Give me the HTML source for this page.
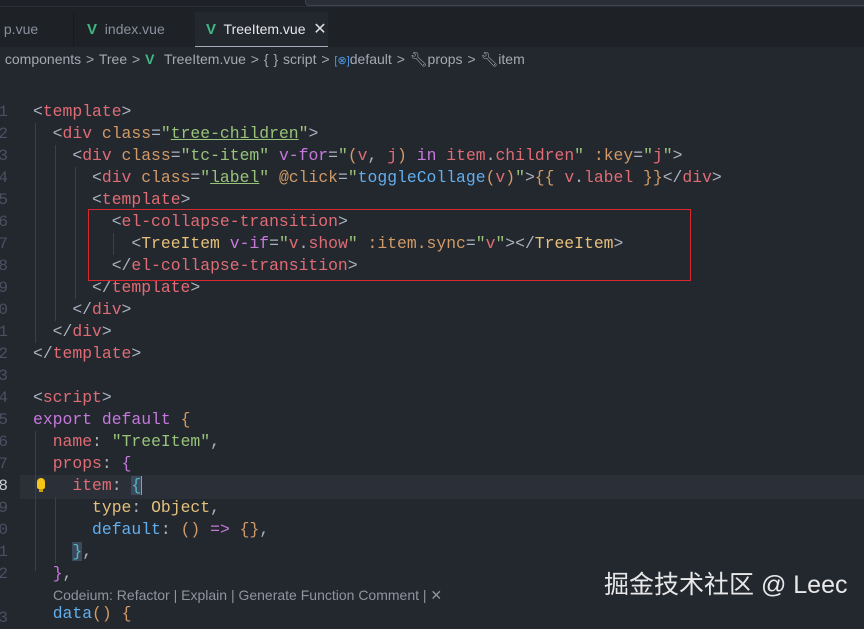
<!DOCTYPE html>
<html><head><meta charset="utf-8"><style>
*{margin:0;padding:0;box-sizing:border-box}
body{width:864px;height:615px;overflow:hidden;background:#23272e;position:relative;font-family:"Liberation Sans",sans-serif}
#tabs{position:absolute;left:0;top:0;width:864px;height:47px;background:#1e2227}
#title{position:absolute;left:0;top:0;width:864px;height:7px;background:#1e2127;border-bottom:1px solid #2a2e36}
#title .box{position:absolute;left:305px;top:-4px;width:570px;height:10px;border:1px solid #3e4450;border-radius:4px;background:#2a2e36}
.tab{position:absolute;top:12px;height:35px;font-size:14px;color:#8a909c;line-height:35px;white-space:nowrap}
.tab.active{background:#23272e;color:#e6e6e6;border-bottom:1px solid #aab}
.v{color:#41b883;font-weight:bold;font-size:15px}
#crumbs{position:absolute;left:0;top:49px;height:20px;font-size:14px;color:#a4a9b3;white-space:nowrap;line-height:20px;word-spacing:1px}
.code{position:absolute;left:33px;font-family:"Liberation Mono",monospace;font-size:16.4px;white-space:pre;line-height:22px;height:22px;color:#abb2bf}
.ln{position:absolute;left:-6px;width:14px;text-align:right;font-family:"Liberation Mono",monospace;font-size:16px;color:#495162;line-height:22px}
.t{color:#e06c75}.a{color:#d19a66}.s{color:#98c379}.k{color:#c678dd}.f{color:#61afef}.p{color:#abb2bf}.y{color:#e5c07b}.c{color:#56b6c2}
.g{position:absolute;width:1px;background:#3b4048}
</style></head><body>
<div id="tabs">
<div class="tab" style="left:0;width:74px;border-right:1px solid #181a1f">&nbsp;p.vue</div>
<div class="tab" style="left:75px;width:119px;padding-left:12px"><span class="v">V</span>&nbsp; index.vue</div>
<div class="tab active" style="left:195px;width:133px;padding-left:11px"><span class="v">V</span>&nbsp; TreeItem.vue &nbsp;<span style="color:#ddd;font-size:16px">✕</span></div>
</div>
<div id="title"><div class="box"></div></div>
<div id="crumbs">&nbsp;components &gt; Tree &gt; <span class="v" style="font-size:14px">V</span>&nbsp; TreeItem.vue &gt; { } script &gt; <span style="color:#4d9be8;font-size:11px">[⊗]</span>default &gt; 🔧︎props &gt; 🔧︎item</div>
<div style="position:absolute;left:20px;top:475px;width:844px;height:24px;background:#2b3038"></div>
<div class="g" style="left:35px;top:123px;height:220px"></div>
<div class="g" style="left:55px;top:145px;height:176px"></div>
<div class="g" style="left:75px;top:167px;height:132px"></div>
<div class="g" style="left:113px;top:233px;height:22px"></div>
<div class="g" style="left:35px;top:431px;height:140px"></div>
<div class="g" style="left:55px;top:497px;height:66px"></div>

<div class="ln" style="top:101px">1</div><div class="code" style="top:101px"><span class="p">&lt;</span><span class="t">template</span><span class="p">&gt;</span></div>
<div class="ln" style="top:123px">2</div><div class="code" style="top:123px">  &lt;<span class="t">div</span> <span class="a">class</span>=<span class="s">"<u>tree-children</u>"</span>&gt;</div>
<div class="ln" style="top:145px">3</div><div class="code" style="top:145px">    &lt;<span class="t">div</span> <span class="a">class</span>=<span class="s">"tc-item"</span> <span class="k">v-for</span>=<span class="s">"</span><span class="a">(</span><span class="t">v</span>, <span class="t">j</span><span class="a">)</span> <span class="k">in</span> <span class="t">item</span>.<span class="t">children</span><span class="s">"</span> <span class="a">:key</span>=<span class="s">"</span><span class="t">j</span><span class="s">"</span>&gt;</div>
<div class="ln" style="top:167px">4</div><div class="code" style="top:167px">      &lt;<span class="t">div</span> <span class="a">class</span>=<span class="s">"<u>label</u>"</span> <span class="a">@click</span>=<span class="s">"</span><span class="f">toggleCollage</span><span class="a">(</span><span class="t">v</span><span class="a">)</span><span class="s">"</span>&gt;<span class="a">{{</span> <span class="t">v</span>.<span class="t">label</span> <span class="a">}}</span>&lt;/<span class="t">div</span>&gt;</div>
<div class="ln" style="top:189px">5</div><div class="code" style="top:189px">      &lt;<span class="t">template</span>&gt;</div>
<div class="ln" style="top:211px">6</div><div class="code" style="top:211px">        &lt;<span class="t">el-collapse-transition</span>&gt;</div>
<div class="ln" style="top:233px">7</div><div class="code" style="top:233px">          &lt;<span class="y">TreeItem</span> <span class="k">v-if</span>=<span class="s">"</span><span class="t">v</span>.<span class="t">show</span><span class="s">"</span> <span class="a">:item.sync</span>=<span class="s">"</span><span class="t">v</span><span class="s">"</span>&gt;&lt;/<span class="y">TreeItem</span>&gt;</div>
<div class="ln" style="top:255px">8</div><div class="code" style="top:255px">        &lt;/<span class="t">el-collapse-transition</span>&gt;</div>
<div class="ln" style="top:277px">9</div><div class="code" style="top:277px">      &lt;/<span class="t">template</span>&gt;</div>
<div class="ln" style="top:299px">0</div><div class="code" style="top:299px">    &lt;/<span class="t">div</span>&gt;</div>
<div class="ln" style="top:321px">1</div><div class="code" style="top:321px">  &lt;/<span class="t">div</span>&gt;</div>
<div class="ln" style="top:343px">2</div><div class="code" style="top:343px">&lt;/<span class="t">template</span>&gt;</div>
<div class="ln" style="top:365px">3</div>
<div class="ln" style="top:387px">4</div><div class="code" style="top:387px">&lt;<span class="t">script</span>&gt;</div>
<div class="ln" style="top:409px">5</div><div class="code" style="top:409px"><span class="k">export default</span> <span class="a">{</span></div>
<div class="ln" style="top:431px">6</div><div class="code" style="top:431px">  <span class="t">name</span>: <span class="s">"TreeItem"</span>,</div>
<div class="ln" style="top:453px">7</div><div class="code" style="top:453px">  <span class="t">props</span>: <span class="k">{</span></div>
<div class="ln" style="top:475px;color:#c8ccd4">8</div><div class="code" style="top:475px">    <span class="t">item</span>: <span class="c" style="background:#3a4a5c;box-shadow:1px 0 0 #7ab">{</span></div>
<div class="ln" style="top:497px">9</div><div class="code" style="top:497px">      <span class="y">type</span>: <span class="y">Object</span>,</div>
<div class="ln" style="top:519px">0</div><div class="code" style="top:519px">      <span class="f">default</span>: <span class="a">()</span> <span class="k">=&gt;</span> <span class="a">{}</span>,</div>
<div class="ln" style="top:541px">1</div><div class="code" style="top:541px">    <span class="c" style="background:#3a4a5c">}</span>,</div>
<div class="ln" style="top:563px">2</div><div class="code" style="top:563px">  <span class="k">}</span>,</div>
<div class="ln" style="top:607px">3</div><div class="code" style="top:603px">  <span class="f">data</span><span class="a">()</span> <span class="a">{</span></div>

<div style="position:absolute;left:88px;top:209px;width:603px;height:72px;border:1px solid #d8282f"></div>
<div style="position:absolute;left:37px;top:478px;width:8px;height:11px;background:#f5c518;border-radius:4px 4px 2px 2px"></div>
<div style="position:absolute;left:39px;top:489px;width:4px;height:3px;background:#c9a000"></div>
<div style="position:absolute;left:53px;top:587px;font-size:14px;color:#8f95a0;white-space:nowrap">Codeium: Refactor | Explain | Generate Function Comment | ✕</div>
<div style="position:absolute;left:604px;top:565px;font-size:25px;color:#e8e8e8;white-space:nowrap;font-family:'Liberation Sans','Noto Sans CJK SC',sans-serif">掘金技术社区 @ Leec</div>
</body></html>
